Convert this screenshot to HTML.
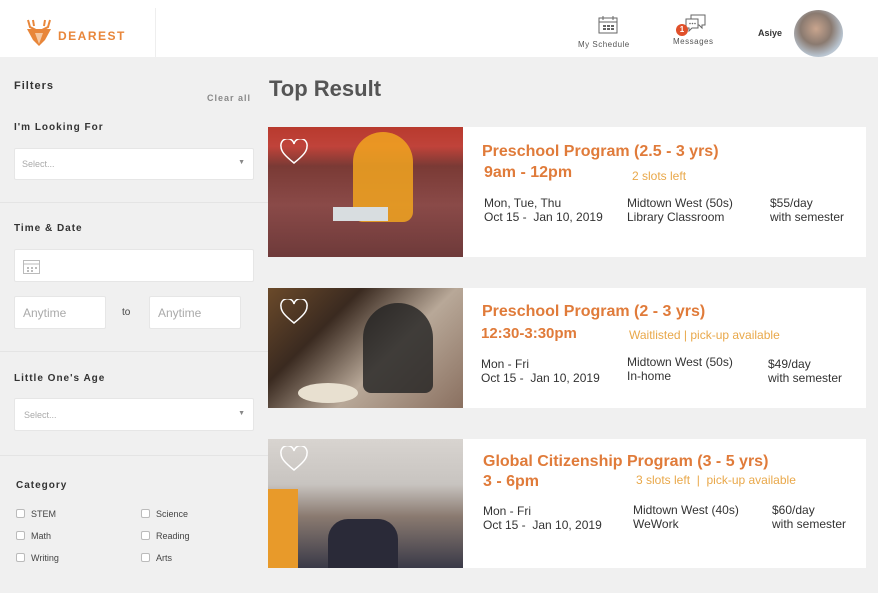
<!DOCTYPE html>
<html><head><meta charset="utf-8"><style>
*{margin:0;padding:0;box-sizing:border-box}
body{width:878px;height:593px;background:#f0f0f0;font-family:"Liberation Sans",Arial,sans-serif;position:relative;overflow:hidden}
.abs{position:absolute}
.hdr{left:0;top:0;width:878px;height:57px;background:#fff}
.lbl{font-weight:bold;font-size:11px;letter-spacing:1px;color:#333}
.box{background:#fff;border:1px solid #e6e6e6;border-radius:2px}
.sel{font-size:9px;color:#aaa}
.hr{height:1px;background:#e4e4e4;left:0;width:268px}
.card{background:#fff;left:268px;width:598px}
.img{left:268px;width:195px}
.t{color:#e07b3a;font-weight:bold;font-size:16px}
.s{color:#e9a84a;font-size:12px}
.d{color:#333;font-size:12px;line-height:14px}
.cb{font-size:9px;color:#444}
.cb span{display:inline-block;width:9px;height:9px;border:1px solid #bbb;border-radius:2px;background:#fff;margin-right:6px;vertical-align:-1px}
</style></head><body>
<div class="abs hdr"></div>
<div class="abs" style="left:155px;top:8px;width:1px;height:49px;background:#eee"></div>
<svg class="abs" style="left:25px;top:18px" width="28" height="30" viewBox="0 0 28 30"><path d="M3 2 L5 9 L11 12 M25 2 L23 9 L17 12 M8 2 L9 8 M20 2 L19 8" stroke="#e8863a" stroke-width="2" fill="none"/><path d="M2 11 L26 11 L20 22 L14 28 L8 22 Z" fill="#e8863a"/><path d="M10 15 L18 15 L14 26Z" fill="#f5c7a0"/></svg>
<div class="abs" style="left:58px;top:29px;color:#e8863a;font-weight:bold;font-size:12px;letter-spacing:1.5px">DEAREST</div>
<svg class="abs" style="left:598px;top:15px" width="20" height="19" viewBox="0 0 20 19"><rect x="1" y="3" width="18" height="15" fill="none" stroke="#666"/><line x1="1" y1="7" x2="19" y2="7" stroke="#666"/><line x1="5" y1="1" x2="5" y2="5" stroke="#666"/><line x1="15" y1="1" x2="15" y2="5" stroke="#666"/><g fill="#666"><rect x="5" y="10" width="3" height="2"/><rect x="9" y="10" width="3" height="2"/><rect x="13" y="10" width="3" height="2"/><rect x="5" y="13" width="3" height="2"/><rect x="9" y="13" width="3" height="2"/><rect x="13" y="13" width="3" height="2"/></g></svg>
<div class="abs" style="left:578px;top:40px;font-size:8px;color:#555;letter-spacing:.5px">My Schedule</div>
<svg class="abs" style="left:684px;top:14px" width="22" height="18" viewBox="0 0 22 18"><path d="M7 1h14v10h-3v3l-3-3H7z" fill="#fff" stroke="#666"/><path d="M2 5h12v9H8l-3 3v-3H2z" fill="#fff" stroke="#666"/><circle cx="6" cy="9.5" r=".8" fill="#666"/><circle cx="8.5" cy="9.5" r=".8" fill="#666"/><circle cx="11" cy="9.5" r=".8" fill="#666"/></svg>
<div class="abs" style="left:676px;top:24px;width:12px;height:12px;border-radius:6px;background:#e0502a;color:#fff;font-size:8px;text-align:center;line-height:12px;font-weight:bold">1</div>
<div class="abs" style="left:673px;top:37px;font-size:8px;color:#555;letter-spacing:.5px">Messages</div>
<div class="abs" style="left:758px;top:28px;font-size:9px;color:#333;font-weight:bold">Asiye</div>
<div class="abs" style="left:794px;top:10px;width:49px;height:47px;border-radius:50%;background:radial-gradient(circle at 45% 40%,#c9a58e,#8a7a70 40%,#b8c4d0 70%,#e8e8ea)"></div>

<div class="abs lbl" style="left:14px;top:80px">Filters</div>
<div class="abs" style="left:207px;top:93px;font-size:9px;font-weight:bold;color:#888;letter-spacing:1px">Clear all</div>
<div class="abs lbl" style="left:14px;top:122px;font-size:10px">I'm Looking For</div>
<div class="abs box" style="left:14px;top:148px;width:240px;height:32px"><span class="abs sel" style="left:7px;top:10px">Select...</span><span class="abs" style="right:8px;top:10px;font-size:7px;color:#888">▼</span></div>
<div class="abs hr" style="top:202px"></div>
<div class="abs lbl" style="left:14px;top:223px;font-size:10px">Time &amp; Date</div>
<div class="abs box" style="left:14px;top:249px;width:240px;height:33px"><svg class="abs" style="left:8px;top:8px" width="17" height="16" viewBox="0 0 17 16"><rect x=".5" y="2.5" width="16" height="13" fill="none" stroke="#bbb"/><line x1="0" y1="6" x2="17" y2="6" stroke="#bbb"/><g fill="#bbb"><rect x="4" y="9" width="2" height="2"/><rect x="8" y="9" width="2" height="2"/><rect x="12" y="9" width="2" height="2"/><rect x="4" y="12" width="2" height="2"/><rect x="8" y="12" width="2" height="2"/></g></svg></div>
<div class="abs box" style="left:14px;top:296px;width:92px;height:33px;font-size:12px;color:#aaa;padding:9px 8px">Anytime</div>
<div class="abs" style="left:122px;top:307px;font-size:10px;color:#444">to</div>
<div class="abs box" style="left:149px;top:296px;width:92px;height:33px;font-size:12px;color:#aaa;padding:9px 8px">Anytime</div>
<div class="abs hr" style="top:351px"></div>
<div class="abs lbl" style="left:14px;top:373px;font-size:10px">Little One's Age</div>
<div class="abs box" style="left:14px;top:398px;width:240px;height:33px"><span class="abs sel" style="left:9px;top:11px">Select...</span><span class="abs" style="right:8px;top:11px;font-size:7px;color:#888">▼</span></div>
<div class="abs hr" style="top:455px"></div>
<div class="abs lbl" style="left:16px;top:480px;font-size:10px">Category</div>
<div class="abs cb" style="left:16px;top:509px"><span></span>STEM</div>
<div class="abs cb" style="left:141px;top:509px"><span></span>Science</div>
<div class="abs cb" style="left:16px;top:531px"><span></span>Math</div>
<div class="abs cb" style="left:141px;top:531px"><span></span>Reading</div>
<div class="abs cb" style="left:16px;top:553px"><span></span>Writing</div>
<div class="abs cb" style="left:141px;top:553px"><span></span>Arts</div>

<div class="abs" style="left:269px;top:76px;font-size:22px;font-weight:bold;color:#555">Top Result</div>

<div class="abs card" style="top:127px;height:130px"></div>
<div class="abs img" style="top:127px;height:130px;background:linear-gradient(180deg,#b83a2e 0%,#c0433a 15%,#7a3a35 30%,#8a4a48 60%,#6e3a3a 100%)"><div class="abs" style="left:85px;top:5px;width:60px;height:90px;background:#f1a420;border-radius:30px 30px 10px 10px;opacity:.85"></div><div class="abs" style="left:65px;top:80px;width:55px;height:14px;background:#d8dde0"></div></div>
<div class="abs" style="left:482px;top:143px" class="t"><span class="t">Preschool Program (2.5 - 3 yrs)</span></div>
<div class="abs t" style="left:484px;top:164px">9am - 12pm</div>
<div class="abs s" style="left:632px;top:169px">2 slots left</div>
<div class="abs d" style="left:484px;top:196px">Mon, Tue, Thu<br>Oct 15 -&nbsp; Jan 10, 2019</div>
<div class="abs d" style="left:627px;top:196px">Midtown West (50s)<br>Library Classroom</div>
<div class="abs d" style="left:770px;top:196px">$55/day<br>with semester</div>

<div class="abs card" style="top:288px;height:120px"></div>
<div class="abs img" style="top:288px;height:120px;background:linear-gradient(135deg,#6b4a2a 0%,#3a2a20 30%,#b8a898 60%,#8a7060 100%)"><div class="abs" style="left:95px;top:15px;width:70px;height:90px;background:#222;border-radius:35px 35px 8px 8px;opacity:.8"></div><div class="abs" style="left:30px;top:95px;width:60px;height:20px;background:#e8e0d0;border-radius:50%"></div></div>
<div class="abs t" style="left:482px;top:303px">Preschool Program (2 - 3 yrs)</div>
<div class="abs t" style="left:481px;top:325px;font-size:15px">12:30-3:30pm</div>
<div class="abs s" style="left:629px;top:328px">Waitlisted | pick-up available</div>
<div class="abs d" style="left:481px;top:357px">Mon - Fri<br>Oct 15 -&nbsp; Jan 10, 2019</div>
<div class="abs d" style="left:627px;top:355px">Midtown West (50s)<br>In-home</div>
<div class="abs d" style="left:768px;top:357px">$49/day<br>with semester</div>

<div class="abs card" style="top:439px;height:129px"></div>
<div class="abs img" style="top:439px;height:129px;background:linear-gradient(180deg,#d8d4d0 0%,#c8c4c0 35%,#8a7a70 60%,#3a3a48 100%)"><div class="abs" style="left:0;top:50px;width:30px;height:79px;background:#e89a2a"></div><div class="abs" style="left:60px;top:80px;width:70px;height:49px;background:#2a2a38;border-radius:20px 20px 0 0"></div></div>
<div class="abs t" style="left:483px;top:453px">Global Citizenship Program (3 - 5 yrs)</div>
<div class="abs t" style="left:483px;top:473px">3 - 6pm</div>
<div class="abs s" style="left:636px;top:473px">3 slots left&nbsp; |&nbsp; pick-up available</div>
<div class="abs d" style="left:483px;top:504px">Mon - Fri<br>Oct 15 -&nbsp; Jan 10, 2019</div>
<div class="abs d" style="left:633px;top:503px">Midtown West (40s)<br>WeWork</div>
<div class="abs d" style="left:772px;top:503px">$60/day<br>with semester</div>

<svg class="abs" style="left:280px;top:139px" width="28" height="26" viewBox="0 0 28 26"><path d="M14 24C4 16 1 12 1 7.5A6 6 0 0 1 14 5a6 6 0 0 1 13 2.5C27 12 24 16 14 24z" fill="none" stroke="#fff" stroke-width="1.5"/></svg>
<svg class="abs" style="left:280px;top:299px" width="28" height="26" viewBox="0 0 28 26"><path d="M14 24C4 16 1 12 1 7.5A6 6 0 0 1 14 5a6 6 0 0 1 13 2.5C27 12 24 16 14 24z" fill="none" stroke="#fff" stroke-width="1.5"/></svg>
<svg class="abs" style="left:280px;top:446px" width="28" height="26" viewBox="0 0 28 26"><path d="M14 24C4 16 1 12 1 7.5A6 6 0 0 1 14 5a6 6 0 0 1 13 2.5C27 12 24 16 14 24z" fill="none" stroke="#fff" stroke-width="1.5"/></svg>
</body></html>
